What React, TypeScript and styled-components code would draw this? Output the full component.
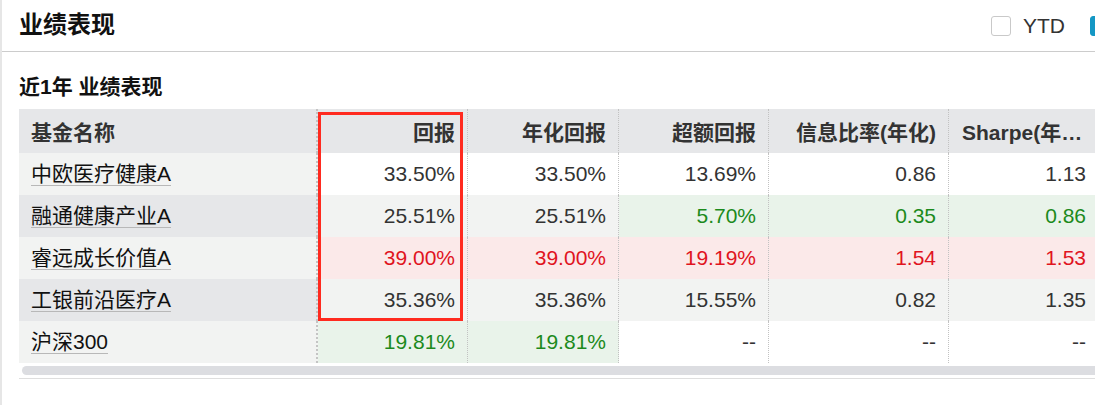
import styled, { createGlobalStyle } from "styled-components";

type Tone = "n" | "g" | "r";

interface FundRow {
  name: string;
  cells: [string, Tone][];
}

const COLS = [299, 150, 151, 150, 180, 150];
const HEADS = ["回报", "年化回报", "超额回报", "信息比率(年化)", "Sharpe(年化)"];

const ROWS: FundRow[] = [
  {
    name: "中欧医疗健康A",
    cells: [["33.50%", "n"], ["33.50%", "n"], ["13.69%", "n"], ["0.86", "n"], ["1.13", "n"]],
  },
  {
    name: "融通健康产业A",
    cells: [["25.51%", "n"], ["25.51%", "n"], ["5.70%", "g"], ["0.35", "g"], ["0.86", "g"]],
  },
  {
    name: "睿远成长价值A",
    cells: [["39.00%", "r"], ["39.00%", "r"], ["19.19%", "r"], ["1.54", "r"], ["1.53", "r"]],
  },
  {
    name: "工银前沿医疗A",
    cells: [["35.36%", "n"], ["35.36%", "n"], ["15.55%", "n"], ["0.82", "n"], ["1.35", "n"]],
  },
  {
    name: "沪深300",
    cells: [["19.81%", "g"], ["19.81%", "g"], ["--", "n"], ["--", "n"], ["--", "n"]],
  },
];

const GlobalStyle = createGlobalStyle`
  body {
    margin: 0;
    background: #fff;
    overflow: hidden;
    font-family: "Liberation Sans", Arial, "Noto Sans CJK SC", sans-serif;
  }
`;

const Card = styled.div`
  width: 1181px;
  min-height: 100vh;
  border-left: 2px solid #e6e6e6;
  background: #fff;
`;

const Header = styled.div`
  height: 51px;
  display: flex;
  align-items: center;
  justify-content: space-between;
  padding: 0 19px 0 17px;
  border-bottom: 1px solid #cccccc;
`;

const Title = styled.h1`
  margin: 0 0 6px;
  font-size: 24px;
  font-weight: bold;
  color: #111;
`;

const Options = styled.div`
  display: flex;
  align-items: center;
  gap: 25px;
`;

const Option = styled.label`
  display: flex;
  align-items: center;
  gap: 12px;
  font-size: 21px;
  color: #333;
`;

const Box = styled.span<{ $checked?: boolean }>`
  width: 20px;
  height: 20px;
  box-sizing: border-box;
  border-radius: 3px;
  border: 1px solid ${(p) => (p.$checked ? "#1497c4" : "#c9c9c9")};
  background: ${(p) => (p.$checked ? "#1497c4" : "#fff")};
  display: flex;
  align-items: center;
  justify-content: center;
`;

const Body = styled.div`
  padding: 0 0 0 17px;
`;

const SectionTitle = styled.h2`
  margin: 0 0 8px;
  padding-top: 21px;
  line-height: 28px;
  font-size: 21px;
  font-weight: bold;
  color: #111;
`;

const TableWrap = styled.div`
  position: relative;
  overflow: hidden;
  border-bottom: 1px solid #dedede;
`;

const Table = styled.table`
  border-collapse: separate;
  border-spacing: 0;
  table-layout: fixed;
  width: ${COLS.reduce((a, b) => a + b, 0)}px;
`;

const Th = styled.th<{ $name?: boolean }>`
  height: 44px;
  padding: 0 12px 0 ${(p) => (p.$name ? "12px" : "13px")};
  box-sizing: border-box;
  background: #e6e7e9;
  font-size: 21px;
  font-weight: bold;
  color: #333;
  text-align: ${(p) => (p.$name ? "left" : "right")};
  white-space: nowrap;
  overflow: hidden;
  text-overflow: ellipsis;
  border-right: ${(p) => (p.$name ? "2px dotted #c4c4c4" : "1px dotted #c2c2c2")};
`;

const toneBg = (tone: Tone, even: boolean) =>
  tone === "g" ? "#e9f3ea" : tone === "r" ? "#fbe9e9" : even ? "#f2f3f2" : "#fff";
const toneColor = (tone: Tone) =>
  tone === "g" ? "#1c8a1c" : tone === "r" ? "#e0141e" : "#333";

const NameCell = styled.td<{ $even: boolean }>`
  height: 42px;
  padding: 0 12px;
  box-sizing: border-box;
  background: ${(p) => (p.$even ? "#e6e7e9" : "#f2f3f2")};
  border-right: 2px dotted #c4c4c4;
  white-space: nowrap;
`;

const FundLink = styled.a`
  display: inline-block;
  line-height: 22px;
  font-size: 21px;
  color: #111;
  text-decoration: none;
  border-bottom: 1px solid #b8b8b8;
`;

const Cell = styled.td<{ $tone: Tone; $even: boolean }>`
  height: 42px;
  padding: 0 12px;
  box-sizing: border-box;
  font-size: 21px;
  text-align: right;
  white-space: nowrap;
  color: ${(p) => toneColor(p.$tone)};
  background: ${(p) => toneBg(p.$tone, p.$even)};
  border-right: 1px dotted #c2c2c2;
`;

const Highlight = styled.div`
  position: absolute;
  left: 299px;
  top: 3px;
  width: 145px;
  height: 209px;
  box-sizing: border-box;
  border: 3px solid #ff2a1f;
  pointer-events: none;
`;

const ScrollTrack = styled.div`
  height: 9px;
  margin: 3px 0 3px 3px;
  border-radius: 5px;
  background: #dcdde1;
`;

function Check() {
  return (
    <svg width="14" height="14" viewBox="0 0 14 14" fill="none">
      <path d="M3 7.2l2.6 2.6L11 4.4" stroke="#fff" strokeWidth="2" strokeLinecap="round" strokeLinejoin="round" />
    </svg>
  );
}

export default function App() {
  return (
    <>
      <GlobalStyle />
      <Card>
        <Header>
          <Title>业绩表现</Title>
          <Options>
            <Option>
              <Box />
              YTD
            </Option>
            <Option>
              <Box $checked>
                <Check />
              </Box>
              年化
            </Option>
          </Options>
        </Header>
        <Body>
          <SectionTitle>近1年 业绩表现</SectionTitle>
          <TableWrap>
            <Table>
              <colgroup>
                {COLS.map((w, i) => (
                  <col key={i} style={{ width: w }} />
                ))}
              </colgroup>
              <thead>
                <tr>
                  <Th $name>基金名称</Th>
                  {HEADS.map((h) => (
                    <Th key={h}>{h}</Th>
                  ))}
                </tr>
              </thead>
              <tbody>
                {ROWS.map((row, i) => (
                  <tr key={row.name}>
                    <NameCell $even={i % 2 === 1}>
                      <FundLink href="#">{row.name}</FundLink>
                    </NameCell>
                    {row.cells.map(([v, tone], j) => (
                      <Cell key={j} $tone={tone} $even={i % 2 === 1}>
                        {v}
                      </Cell>
                    ))}
                  </tr>
                ))}
              </tbody>
            </Table>
            <ScrollTrack />
            <Highlight />
          </TableWrap>
        </Body>
      </Card>
    </>
  );
}
